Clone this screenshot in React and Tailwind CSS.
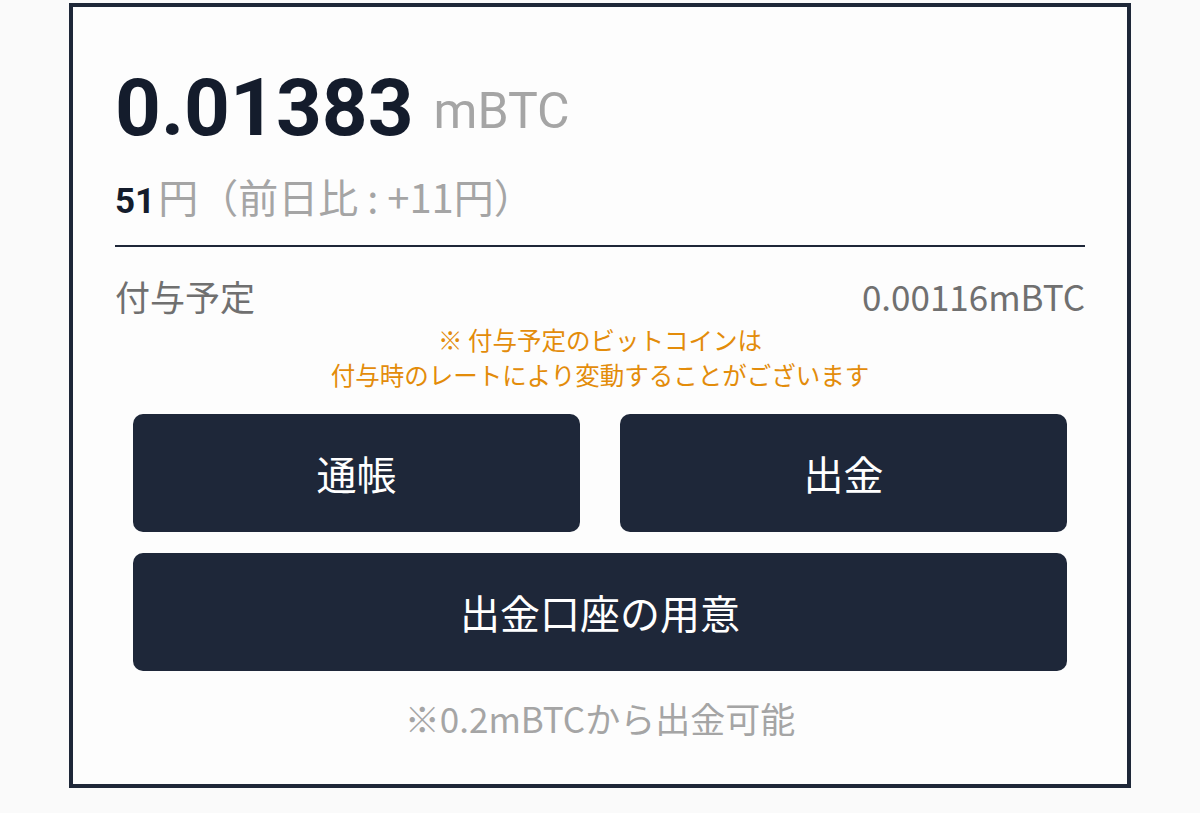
import React from "react";

const roboto = { fontFamily: "Roboto, 'Noto Sans CJK JP', sans-serif" };
const noto = { fontFamily: "'Noto Sans CJK JP', 'Noto Sans', sans-serif" };

const App = () => {
  return (
    <div
      className="w-[1200px] h-[813px] bg-[#fafafa] pt-[3px] pl-[69px]"
      style={noto}
    >
      <div className="w-[1062px] h-[785px] border-4 border-[#1e2738] bg-[#fdfdfd] px-[42px] pt-[61px] flex flex-col">
        {/* balance */}
        <div className="flex items-start gap-[20px]" style={roboto}>
          <p className="text-[80px] leading-none font-bold text-[#141c2c]">
            0.01383
          </p>
          <p className="text-[50px] leading-none text-[#a5a5a5] mt-[18px]">
            mBTC
          </p>
        </div>

        <p className="mt-[28px] h-[40px] flex items-baseline leading-none text-[#a5a5a5]">
          <span className="text-[35px] font-bold text-[#141c2c]" style={roboto}>
            51
          </span>
          <span className="text-[40px] ml-[3px]">円（前日比 : +11円）</span>
        </p>

        <div className="mt-[29px] h-[2px] bg-[#1e2738]"></div>

        {/* scheduled */}
        <div className="mt-[31px] flex justify-between items-center text-[35px] leading-none text-[#707070]">
          <p>付与予定</p>
          <p>0.00116mBTC</p>
        </div>

        <div className="mt-[9px] text-center text-[24.5px] leading-[35px] text-[#e38c0a]">
          <p>※ 付与予定のビットコインは</p>
          <p>付与時のレートにより変動することがございます</p>
        </div>

        {/* actions */}
        <div className="mt-[22px] px-[18px] flex flex-col gap-[21px]">
          <div className="grid grid-cols-2 gap-[40px]">
            <button className="h-[118px] rounded-[10px] bg-[#1e2739] text-white text-[40px]">
              通帳
            </button>
            <button className="h-[118px] rounded-[10px] bg-[#1e2739] text-white text-[40px]">
              出金
            </button>
          </div>
          <button className="h-[118px] rounded-[10px] bg-[#1e2739] text-white text-[40px]">
            出金口座の用意
          </button>
        </div>

        <p className="mt-[29px] text-center text-[35px] leading-none text-[#a5a5a5]">
          ※0.2mBTCから出金可能
        </p>
      </div>
    </div>
  );
};

export default App;
